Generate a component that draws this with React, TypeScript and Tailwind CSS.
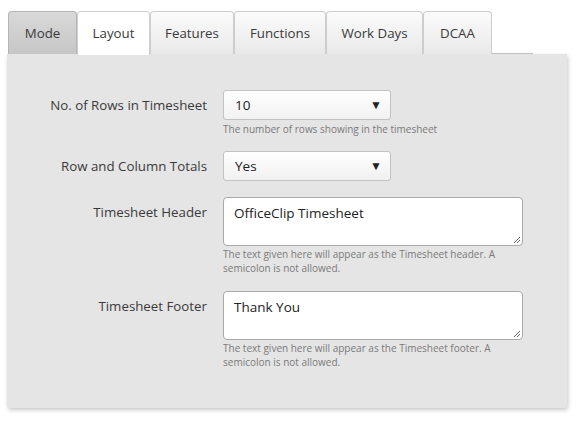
import React from "react";

const tabs = [
  { name: "Mode", w: "w-[69px]", kind: "pressed" },
  { name: "Layout", w: "w-[73px]", kind: "active" },
  { name: "Features", w: "w-[84px]", kind: "normal" },
  { name: "Functions", w: "w-[92px]", kind: "normal" },
  { name: "Work Days", w: "w-[97px]", kind: "normal" },
  { name: "DCAA", w: "w-[69px]", kind: "normal" },
];

function Tab({ name, w, kind }: { name: string; w: string; kind: string }) {
  const base = `${w} h-[43px] flex items-center justify-center rounded-t-[4px] border border-b-0 text-[13.3px] text-[#3a3a3a] pt-[1px]`;
  if (kind === "pressed")
    return <div className={`${base} border-[#b5b5b5] bg-gradient-to-b from-[#d9d9d9] to-[#c6c6c6]`}>{name}</div>;
  if (kind === "active")
    return <div className={`${base} border-[#d0d0d0] bg-white h-[44px] relative z-10`}>{name}</div>;
  return <div className={`${base} border-[#cdcdcd] bg-gradient-to-b from-[#fbfbfb] to-[#e9e9e9]`}>{name}</div>;
}

function Select({ value }: { value: string }) {
  return (
    <div className="w-[168px] h-[30px] rounded-[3px] border border-[#c2c2c2] bg-gradient-to-b from-white to-[#f1f1f1] flex items-center justify-between pl-[11px] pr-[8px] text-[13.5px] text-[#222]">
      <span>{value}</span>
      <span className="text-[12px] text-[#222]">▼</span>
    </div>
  );
}

function Textarea({ value }: { value: string }) {
  return (
    <div className="relative w-[300px] h-[49px] rounded-[4px] border border-[#a9a9a9] bg-white pl-[10px] pt-[4px] text-[13.5px] text-[#222] leading-[22px]">
      {value}
      <svg className="absolute right-[1px] bottom-[1px]" width="9" height="9" viewBox="0 0 9 9">
        <line x1="8" y1="2" x2="2" y2="8" stroke="#666" strokeWidth="1" />
        <line x1="8" y1="5" x2="5" y2="8" stroke="#666" strokeWidth="1" />
      </svg>
    </div>
  );
}

function Help({ children }: { children: React.ReactNode }) {
  return <div className="text-[10px] leading-[14px] text-[#7a7a7a] w-[300px]">{children}</div>;
}

function Row({ label, children, cls }: { label: string; children: React.ReactNode; cls: string }) {
  return (
    <div className={`flex ${cls}`}>
      <div className="w-[200px] text-right text-[13.3px] text-[#3a3a3a] leading-[30px]">{label}</div>
      <div className="ml-[16px] flex flex-col">{children}</div>
    </div>
  );
}

export default function App() {
  return (
    <div className="w-[585px] h-[421px] bg-white" style={{ fontFamily: '"Open Sans", "Noto Sans", sans-serif' }}>
      <div className="pt-[11px] pl-[8px]">
        <div className="flex w-[525px] border-b border-[#c8c8c8] h-[43px] items-start">
          {tabs.map((t) => (
            <Tab key={t.name} {...t} />
          ))}
        </div>
      </div>
      <div className="ml-[7px] w-[560px] bg-[#e5e5e5] rounded-b-[3px] shadow-[1px_2px_4px_rgba(0,0,0,0.22)] pt-[36px] pb-[39px]">
        <Row label="No. of Rows in Timesheet" cls="mb-[15px]">
          <Select value="10" />
          <div className="mt-[2px]">
            <Help>The number of rows showing in the timesheet</Help>
          </div>
        </Row>
        <Row label="Row and Column Totals" cls="mb-[16px]">
          <Select value="Yes" />
        </Row>
        <Row label="Timesheet Header" cls="mb-[16px]">
          <Textarea value="OfficeClip Timesheet" />
          <div className="mt-[1px]">
            <Help>The text given here will appear as the Timesheet header. A semicolon is not allowed.</Help>
          </div>
        </Row>
        <Row label="Timesheet Footer" cls="">
          <Textarea value="Thank You" />
          <div className="mt-[1px]">
            <Help>The text given here will appear as the Timesheet footer. A semicolon is not allowed.</Help>
          </div>
        </Row>
      </div>
    </div>
  );
}
